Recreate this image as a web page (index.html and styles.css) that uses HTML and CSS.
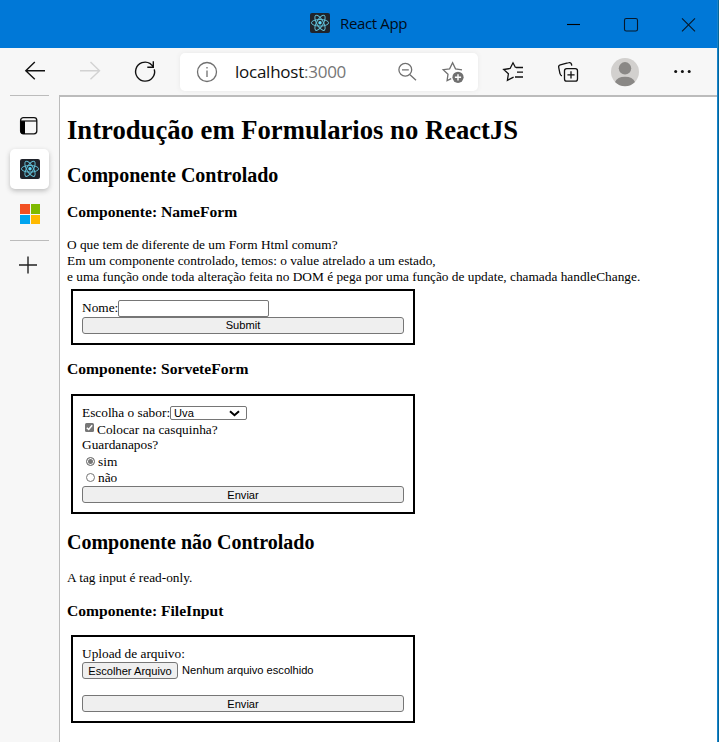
FILE: index.html
```html
<!DOCTYPE html>
<html lang="pt-BR">
<head>
<meta charset="utf-8">
<title>React App</title>
<link rel="stylesheet" href="styles.css">
</head>
<body>
<svg width="0" height="0" class="defs">
  <symbol id="react" viewBox="0 0 20 20">
    <rect width="20" height="20" rx="2" fill="#20232a"/>
    <g fill="none" stroke="#61bdd4" stroke-width="1">
      <ellipse cx="10" cy="9.8" rx="8.6" ry="3.3"/>
      <ellipse cx="10" cy="9.8" rx="8.6" ry="3.3" transform="rotate(60 10 9.8)"/>
      <ellipse cx="10" cy="9.8" rx="8.6" ry="3.3" transform="rotate(120 10 9.8)"/>
    </g>
    <circle cx="10" cy="9.8" r="1.7" fill="#61dafb"/>
  </symbol>
</svg>
<div class="window">
  <header class="titlebar">
    <svg class="favicon" width="20" height="20"><use href="#react"/></svg>
    <span class="title">React App</span>
    <svg class="controls" width="140" height="24" viewBox="560 12 140 24" fill="none" stroke="#07182a" stroke-width="1.1">
      <path d="M567 24.5h13" stroke="#000"/>
      <rect x="624.5" y="18.5" width="13" height="12.5" rx="1.8"/>
      <path d="M682 18.3l13 13M695 18.3l-13 13"/>
    </svg>
  </header>
  <nav class="toolbar">
    <svg class="nav-icons" width="180" height="47" viewBox="0 48 180 47" fill="none" stroke-width="1.4">
      <path d="M45 70.7H25.8M34.8 62L25.8 70.7L34.8 79.3" stroke="#111"/>
      <path d="M80 70.7h19.3M90.5 62l9 8.7l-9 8.6" stroke="#d2d2d2"/>
      <path d="M154.3 69.3A9.5 9.5 0 1 1 150.3 63.7L153.3 66.5M153.3 61.2v6h-6" stroke="#111"/>
    </svg>
    <div class="address">
      <svg class="info" width="22" height="22" viewBox="0 0 22 22" fill="none" stroke="#707070" stroke-width="1.3"><circle cx="11" cy="11" r="9.5"/><path d="M11 9.5v6.6M11 6v1.6"/></svg>
      <span class="url">localhost<span>:3000</span></span>
      <svg class="address-icons" width="78" height="36" viewBox="390 54 78 36" fill="none" stroke="#707070" stroke-width="1.3">
        <circle cx="405.3" cy="69.8" r="6.4"/><path d="M402 69.8h6.8M410 74.7l6 5.6"/>
        <path d="M451.2 78.6l-4.1 2.1l.9-6.5l-4.8-4.5l6.4-.9l3-6l2.9 6l6.5 1"/>
        <circle cx="458" cy="77.3" r="5.6" fill="#707070" stroke="none"/><path d="M458 74.2v6.2M454.9 77.3h6.2" stroke="#fff" stroke-width="1.4"/>
      </svg>
    </div>
    <svg class="actions" width="239" height="47" viewBox="478 48 239 47" fill="none" stroke="#111" stroke-width="1.3">
      <path d="M515.6 67.8l-2.6-5l-2.9 5.7l-6.4 1l4.7 4.3l-1 6.5l6.2-3.1M516 67.5h7M517 72.2h6M515 77h8"/>
      <rect x="564.5" y="68.6" width="13" height="12.5" rx="2.2"/><path d="M571 71.2v7.2M567.4 74.8h7.2M562 75.8c-1.7-.2-1.8-1.4-2.1-2.5l-1.2-6c-.3-1.6.4-2.2 1.6-2.5l8.4-2.1c1.4-.4 2.3 0 2.7 1.3l.4 1.6"/>
      <g stroke="none"><circle cx="625" cy="72" r="14" fill="#d2d0ce"/><circle cx="625" cy="68.3" r="6.2" fill="#8a8886"/><path d="M615 82a10.5 7.5 0 0 1 20 0a14 14 0 0 1-20 0z" fill="#8a8886"/>
      <g fill="#111"><circle cx="675.7" cy="71.5" r="1.5"/><circle cx="682.4" cy="71.5" r="1.5"/><circle cx="689.2" cy="71.5" r="1.5"/></g></g>
    </svg>
  </nav>
  <div class="body">
    <aside class="tabs">
      <svg class="tabs-toggle" width="20" height="20" viewBox="0 0 20 20"><rect x="1.6" y="1.6" width="16.2" height="16.2" rx="2.8" fill="none" stroke="#111" stroke-width="1.3"/><path d="M1.5 5H6v13H4c-1.7 0-2.5-1-2.5-2.5z" fill="#000"/><path d="M2 5h16" stroke="#111" stroke-width="1.2"/></svg>
      <div class="tab-active"><svg width="20" height="20"><use href="#react"/></svg></div>
      <div class="ms"><i></i><i></i><i></i><i></i></div>
      <div class="divider"></div>
      <svg class="plus" width="18" height="18" viewBox="0 0 18 18"><path d="M0 9h18M9 .5v17" stroke="#222" stroke-width="1.4"/></svg>
    </aside>
    <main class="page">
      <h1>Introdução em Formularios no ReactJS</h1>
      <h2>Componente Controlado</h2>
      <h3 class="name-title">Componente: NameForm</h3>
      <p>O que tem de diferente de um Form Html comum?<br>Em um componente controlado, temos: o value atrelado a um estado,<br>e uma função onde toda alteração feita no DOM é pega por uma função de update, chamada handleChange.</p>
      <form class="box name-form">
        <div class="row"><label for="nome">Nome:</label><input id="nome" class="text" type="text"></div>
        <button type="button">Submit</button>
      </form>
      <h3 class="sorvete-title">Componente: SorveteForm</h3>
      <form class="box sorvete-form">
        <div class="row flavor">Escolha o sabor:<span class="select">Uva<svg width="11" height="7" viewBox="0 0 11 7"><path d="M1 1.2l4.5 4l4.5-4" fill="none" stroke="#000" stroke-width="2"/></svg></span></div>
        <div class="row cone"><svg class="check" width="9" height="9" viewBox="0 0 9 9"><rect width="9" height="9" rx="1.5" fill="#767676"/><path d="M1.8 4.7l1.9 1.8l3.5-4.3" fill="none" stroke="#fff" stroke-width="1.5"/></svg>Colocar na casquinha?</div>
        <div class="row napkin">Guardanapos?</div>
        <div class="row option yes"><i class="radio on"></i>sim</div>
        <div class="row option"><i class="radio"></i>não</div>
        <button type="button" class="low">Enviar</button>
      </form>
      <h2 class="uncontrolled">Componente não Controlado</h2>
      <p class="readonly">A tag input é read-only.</p>
      <h3 class="file-title">Componente: FileInput</h3>
      <form class="box file-form">
        <div class="row upload">Upload de arquivo:</div>
        <div class="file"><button type="button" class="low">Escolher Arquivo</button><span>Nenhum arquivo escolhido</span></div>
        <button type="button" class="low">Enviar</button>
      </form>
    </main>
  </div>
</div>
<div class="desktop-edge"></div>
</body>
</html>
```
FILE: styles.css
```css
* { box-sizing: border-box; }
body { margin: 0; width: 719px; height: 742px; overflow: hidden; display: flex; background: #fff; }
.defs { position: absolute; }
svg { display: block; flex: none; }
.window { width: 717px; height: 742px; display: flex; flex-direction: column; }
.desktop-edge { width: 2px; background: linear-gradient(90deg, #1683cd 50%, #04679b 50%); }
.titlebar { height: 48px; background: #0078d7; display: flex; align-items: center; padding-left: 310px; flex: none; }
.favicon { margin-top: -2px; }
.title { font: 15px/20px "Open Sans", sans-serif; letter-spacing: -.35px; margin: -2px 0 0 10px; width: 80px; white-space: nowrap; color: #000b18; }
.controls { margin-left: 140px; }
.toolbar { height: 47px; background: #f7f7f7; display: flex; flex: none; }
.address { width: 298px; height: 38px; margin-top: 5px; background: #fff; border-radius: 5px; display: flex; align-items: center; box-shadow: 0 0 5px #e8e8e8; }
.info { margin-left: 16px; }
.url { font: 17px/24px "Open Sans", sans-serif; letter-spacing: -.25px; margin-left: 17px; width: 155px; white-space: nowrap; color: #111; }
.url span { color: #767676; }
.body { flex: 1; display: flex; min-height: 0; background: #f7f7f7; }
.tabs { width: 59px; padding: 0 10px; display: flex; flex-direction: column; align-items: center; }
.tabs::before { content: ""; height: 1px; width: 39px; background: #bcbcbc; }
.tabs-toggle { margin-top: 20px; margin-right: 1px; }
.tab-active { width: 39px; height: 40px; margin-top: 13px; background: #fff; border-radius: 5px; box-shadow: 0 2px 5px #bdbdbd; display: grid; place-items: center; }
.ms { width: 20px; height: 20px; margin: 15px 0 0 1px; display: grid; grid-template-columns: 9.5px 9.5px; gap: 1px; }
.ms i { background: #f25022; height: 9.5px; }
.ms i:nth-child(2) { background: #7fba00; }
.ms i:nth-child(3) { background: #00a4ef; }
.ms i:nth-child(4) { background: #ffb900; }
.divider { height: 1px; width: 39px; background: #bcbcbc; margin-top: 16px; }
.plus { margin: 15px 3px 0 0; }
.page { flex: 1; background: #fff; border-left: 1px solid #bcbcbc; border-top: 2px solid #bcbcbc; padding-left: 7px; font: 13.333px/16px "Liberation Serif", serif; color: #000; white-space: nowrap; }
h1, h2, h3, p { margin: 0; }
h1 { font-size: 26.667px; line-height: 30px; margin-top: 18px; }
h2 { font-size: 20px; line-height: 22px; margin-top: 19px; }
h3 { font-size: 15.6px; line-height: 18px; margin-top: 16px; }
.name-title { margin-top: 17px; }
p { margin-top: 16px; }
.box { width: 344px; margin-left: 4px; border: 2px solid #000; padding: 9px; display: flex; flex-direction: column; }
.row { height: 16px; display: flex; align-items: center; flex: none; }
.name-form { height: 56px; margin-top: 4px; }
.name-form .row { height: 17px; }
.name-form label { margin-top: -2px; width: 36px; }
.text { width: 151px; height: 17px; border: 1px solid #767676; border-radius: 2px; padding: 0; }
button { height: 17px; width: 322px; padding: 0; border: 1px solid #767676; border-radius: 3px; background: #efefef; font: 11.111px/15px "Liberation Sans", sans-serif; color: #000; flex: none; }
.low { padding-top: 2px; line-height: 13px; }
.sorvete-title { margin-top: 15px; }
.sorvete-form { height: 120px; margin-top: 16px; }
.flavor { height: 17px; padding-bottom: 1px; }
.select { width: 77px; height: 14px; border: 1px solid #767676; border-radius: 2px; display: flex; align-items: center; justify-content: space-between; padding: 0 6px 0 3px; font: 11.111px/12px "Liberation Sans", sans-serif; }
.cone { height: 15px; }
.check { margin: -4px 3px 0; }
.radio { width: 9px; height: 9px; border: 1px solid #767676; border-radius: 50%; margin: -2px 3px 0 4px; }
.on { background: #767676; box-shadow: inset 0 0 0 1px #fff; }
.yes { margin-top: 1px; }
.uncontrolled { margin-top: 17px; }
.readonly { margin-top: 17px; }
.file-title { margin-top: 16px; }
.file-form { height: 88px; margin-top: 15px; }
.file { display: flex; align-items: center; height: 17px; margin-bottom: 16px; font: 11.111px/15px "Liberation Sans", sans-serif; }
.file button { width: 96px; }
.file span { margin-left: 4px; }
```
